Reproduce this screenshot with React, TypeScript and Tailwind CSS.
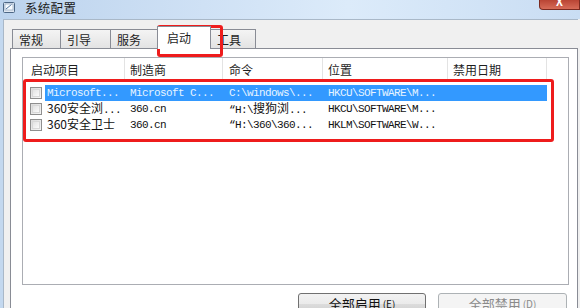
import React from "react";

const cols = [
  { label: "启动项目", w: "w-[102px]", pl: "pl-[8px]" },
  { label: "制造商", w: "w-[98px]", pl: "pl-[5px]" },
  { label: "命令", w: "w-[100px]", pl: "pl-[6px]" },
  { label: "位置", w: "w-[125px]", pl: "pl-[5px]" },
  { label: "禁用日期", w: "w-[99px]", pl: "pl-[5px]" },
];

// CJK bits sit at full 12px, latin at the narrow mono width
const Cjk = ({ children }: { children: React.ReactNode }) => (
  <span className="font-['Noto_Sans_CJK_SC',sans-serif] text-[12px] tracking-normal">{children}</span>
);

const rows: { cells: React.ReactNode[]; selected?: boolean }[] = [
  {
    selected: true,
    cells: ["Microsoft...", "Microsoft C...", "C:\\windows\\...", "HKCU\\SOFTWARE\\M...", ""],
  },
  {
    cells: [
      <><Cjk>360安全浏</Cjk>...</>,
      "360.cn",
      <>{"“H:\\"}<Cjk>搜狗浏</Cjk>...</>,
      "HKCU\\SOFTWARE\\M...",
      "",
    ],
  },
  {
    cells: [
      <Cjk>360安全卫士</Cjk>,
      "360.cn",
      "“H:\\360\\360...",
      "HKLM\\SOFTWARE\\W...",
      "",
    ],
  },
];

const rowCols = [
  { w: "w-[80px]", pl: "pl-[2px]" },
  { w: "w-[98px]", pl: "pl-[5px]" },
  { w: "w-[100px]", pl: "pl-[6px]" },
  { w: "w-[125px]", pl: "pl-[5px]" },
  { w: "w-[99px]", pl: "pl-[5px]" },
];

function Checkbox() {
  return (
    <div className="h-[12px] w-[12px] border border-[#8f8f8f] bg-[linear-gradient(135deg,#dcdcdc,#f6f6f6)] p-[1px]">
      <div className="h-full w-full border border-[#d8d8d8] bg-[linear-gradient(135deg,#e2e2e2,#fbfbfb)]" />
    </div>
  );
}

function TitleBar() {
  return (
    <div className="relative flex h-[19px] shrink-0 items-center bg-[linear-gradient(90deg,#bcd3ed_0%,#cfe1f5_35%,#dcebfa_60%,#c9ddf3_100%)]">
      <svg className="ml-[3px] mt-[-4px]" width="12" height="12" viewBox="0 0 12 12">
        <rect x="0.5" y="0.5" width="11" height="10" rx="1" fill="#dfe7f1" stroke="#4d6785" />
        <rect x="2" y="2" width="8" height="6" fill="#f7fbff" stroke="#7f96b3" strokeWidth="0.6" />
        <path d="M3 7 L8.5 2.5" stroke="#5678a0" strokeWidth="1" />
      </svg>
      <span className="ml-[10px] mt-[-2px] text-[12.5px] leading-none tracking-[0.3px] text-[#1b1b1b]">系统配置</span>
      <div className="absolute right-0 top-0 flex h-[10px] w-[41px] items-start justify-center overflow-hidden rounded-bl-[4px] border border-t-0 border-[#7b2a20] bg-[linear-gradient(180deg,#b94434,#d76c58)]">
        <span className="mt-[-4px] text-[11px] font-bold leading-none text-white">X</span>
      </div>
    </div>
  );
}

function Tab({ label, w, selected }: { label: string; w: string; selected?: boolean }) {
  if (selected) {
    return (
      <div className={`relative z-10 -mb-px -ml-px flex h-[23px] ${w} items-start border border-b-0 border-[#898c95] bg-white pl-[9px] pt-[3px] text-[12px] leading-[16px]`}>
        {label}
      </div>
    );
  }
  return (
    <div className={`-ml-px flex h-[19px] ${w} items-start border border-b-0 border-[#898c95] bg-[linear-gradient(180deg,#f4f4f4,#e3e3e3)] pl-[6px] pt-[2px] text-[12px] leading-[16px] first:ml-0`}>
      {label}
    </div>
  );
}

function Button({ label, hotkey, disabled, w }: { label: string; hotkey: string; disabled?: boolean; w: string }) {
  return (
    <div
      className={`flex h-[21px] shrink-0 ${w} items-center justify-center rounded-[3px] border ${
        disabled
          ? "border-[#adb2b5] bg-[#f4f4f4] text-[#8a8a8a]"
          : "border-[#707070] bg-[linear-gradient(180deg,#f2f2f2_0%,#ebebeb_50%,#dddddd_51%,#cfcfcf_100%)] text-[#111]"
      }`}
    >
      <span className="text-[13px] leading-none">{label}</span>
      <span className="ml-[2px] text-[10px] leading-none">({hotkey})</span>
    </div>
  );
}

export default function App() {
  return (
    <div className="relative flex h-[308px] w-[580px] flex-col overflow-hidden bg-[#f0f0f0] font-['Noto_Sans_CJK_SC',sans-serif] text-[#1e1e1e]">
      <TitleBar />
      <div className="flex min-h-0 flex-1 border-l-[3px] border-[#c3d8ef]">
        <div className="flex min-h-0 flex-1 flex-col border-l border-t border-[#a9b8c8] pl-[6px]">
          {/* tab strip */}
          <div className="flex h-[28px] shrink-0 items-end pl-[2px]">
            <Tab label="常规" w="w-[49px]" />
            <Tab label="引导" w="w-[51px]" />
            <Tab label="服务" w="w-[48px]" />
            <Tab label="启动" w="w-[54px]" selected />
            <Tab label="工具" w="w-[46px]" />
          </div>

          {/* tab panel */}
          <div className="flex min-h-0 w-[568px] flex-1 flex-col border border-b-0 border-[#898c95] bg-white pl-[11px] pr-[10px] pt-[8px]">
            <div className="flex h-[228px] w-[547px] shrink-0 flex-col border border-[#abadb3] bg-white">
              {/* header */}
              <div className="flex h-[21px] shrink-0">
                {cols.map((c) => (
                  <div key={c.label} className={`flex h-full ${c.w} items-center border-r border-[#e3e3e3] ${c.pl} pt-[3px] text-[12px] leading-[16px]`}>
                    {c.label}
                  </div>
                ))}
              </div>
              <div className="flex shrink-0 flex-col pt-[6px]">
                {rows.map((r, i) => (
                  <div key={i} className="flex h-[16px] items-center">
                    <div className="flex w-[22px] items-center pl-[7px]">
                      <Checkbox />
                    </div>
                    <div
                      className={`flex h-full items-center font-['Liberation_Mono','Noto_Sans_CJK_SC',monospace] text-[11px] tracking-[-0.6px] ${
                        r.selected ? "bg-[#3399ff] text-[#e6f4ff]" : "text-[#111]"
                      }`}
                    >
                      {r.cells.map((c, j) => (
                        <div key={j} className={`${rowCols[j].w} ${rowCols[j].pl} whitespace-nowrap leading-[16px]`}>
                          {c}
                        </div>
                      ))}
                    </div>
                  </div>
                ))}
              </div>
            </div>

            <div className="mt-[8px] flex shrink-0 justify-end gap-[12px]">
              <Button label="全部启用" hotkey="E" w="w-[128px]" />
              <Button label="全部禁用" hotkey="D" w="w-[129px]" disabled />
            </div>
          </div>
        </div>
        <div className="w-[2px]" />
      </div>

      {/* red annotation boxes */}
      <div className="pointer-events-none absolute left-[157px] top-[25px] h-[32px] w-[66px] rounded-[3px] border-[3px] border-[#ee1c1c]" />
      <div className="pointer-events-none absolute left-[23px] top-[79px] h-[63px] w-[531px] rounded-[3px] border-[3px] border-[#ee1c1c]" />
    </div>
  );
}
